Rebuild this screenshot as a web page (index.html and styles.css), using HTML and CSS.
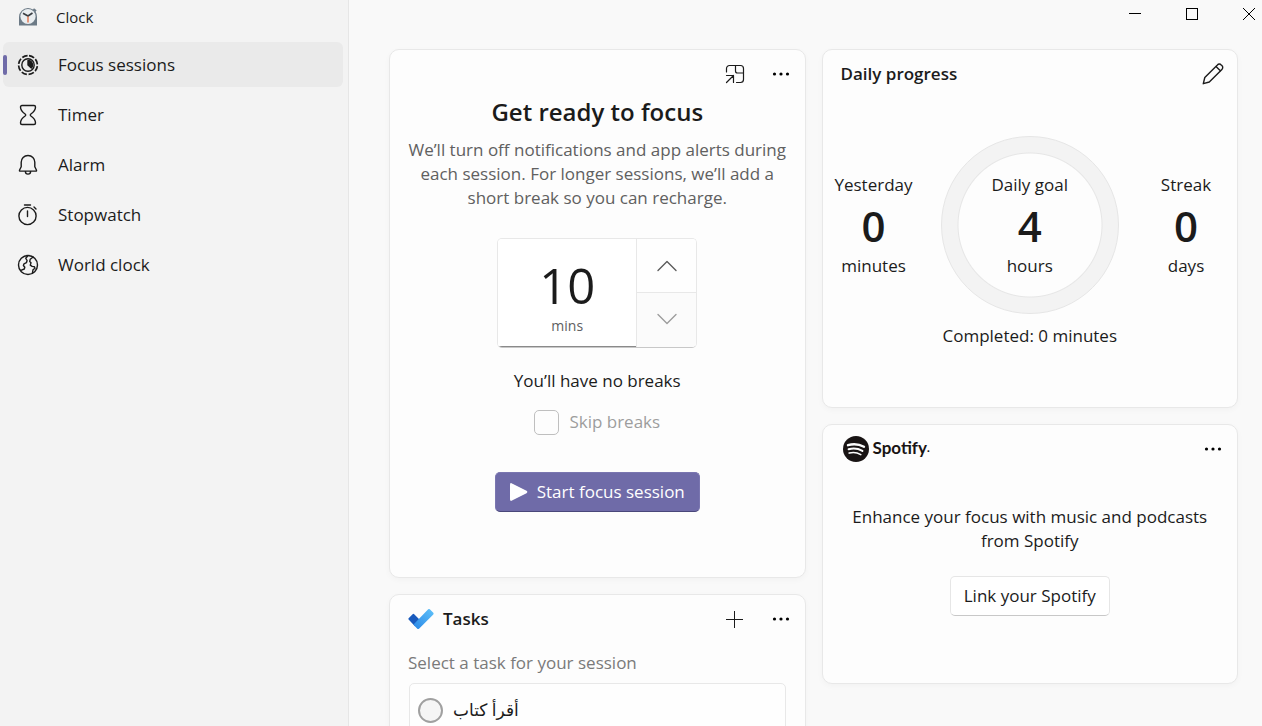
FILE: index.html
```html
<!DOCTYPE html>
<html lang="en">
<head>
<meta charset="utf-8">
<meta name="viewport" content="width=device-width, initial-scale=1">
<title>Clock</title>
<link rel="stylesheet" href="styles.css">
</head>
<body>
<div class="app">
  <aside class="sidebar">
    <div class="app-title">
      <svg class="app-icon" width="20" height="20" viewBox="0 0 20 20" aria-hidden="true">
        <path d="M1 18.500V10A9 9 0 0 1 10 1a9 9 0 0 1 5 1.500l1-1.300 2.600 2-1 1.600A9 9 0 0 1 19 10v8.500H1z" fill="#6c7a86"/>
        <circle cx="10" cy="9.500" r="7.600" fill="#e9edf0"/>
        <path d="M5 6.300 10 9l4.500-3" fill="none" stroke="#3b3f44" stroke-width="1.700"/>
        <path d="M10 9.500v6" stroke="#e2683c" stroke-width="1.300"/>
      </svg>
      <span>Clock</span>
    </div>
    <nav class="nav">
      <a class="nav-item active" href="#focus" aria-current="page">
        <svg class="icon" width="22" height="22" viewBox="0 0 22 22" aria-hidden="true">
          <circle cx="11" cy="11" r="9.400" stroke-width="1.700" stroke-linecap="butt" stroke-dasharray="5.600 1.780" transform="rotate(-84 11 11)"/>
          <circle cx="11" cy="11" r="6.200"/>
          <path d="M11 6.500a4.500 4.500 0 0 1 3.300 7.600L11 11z" fill="currentColor"/>
        </svg>
        <span>Focus sessions</span>
      </a>
      <a class="nav-item" href="#timer">
        <svg class="icon" width="22" height="22" viewBox="0 0 22 22" aria-hidden="true">
          <path d="M5 1.500h12q1.500 0 1.500 1.500c0 3.300-2 5.200-4.600 7q-1.200 1 0 2c2.600 1.800 4.600 3.700 4.600 7q0 1.500-1.500 1.500H5Q3.500 20.500 3.500 19c0-3.300 2-5.200 4.600-7q1.200-1 0-2C5.500 8.200 3.500 6.300 3.500 3Q3.500 1.500 5 1.500z"/>
        </svg>
        <span>Timer</span>
      </a>
      <a class="nav-item" href="#alarm">
        <svg class="icon" width="22" height="22" viewBox="0 0 22 22" aria-hidden="true">
          <path d="M11 1.500c-4 0-6.800 3-6.800 6.700v4.600L2.600 16q-.500 1.100.6 1.100h15.600q1.100 0 .6-1.100l-1.600-3.200V8.200c0-3.700-2.800-6.700-6.800-6.700zM8.400 17.500a2.600 2.600 0 0 0 5.200 0"/>
        </svg>
        <span>Alarm</span>
      </a>
      <a class="nav-item" href="#stopwatch">
        <svg class="icon" width="22" height="22" viewBox="0 0 22 22" aria-hidden="true">
          <circle cx="10.500" cy="12" r="8.600"/>
          <path d="M10.500 7v5.500M7.500 1h6M17 3l2 2"/>
        </svg>
        <span>Stopwatch</span>
      </a>
      <a class="nav-item" href="#world">
        <svg class="icon" width="22" height="22" viewBox="0 0 22 22" aria-hidden="true">
          <circle cx="11" cy="11" r="9.500"/>
          <path d="M10.800 1.800 8.800 4.300l1.300 2.200-.7 2.200L7 9.800l-.6 1.700 1.400 1.800-.5 1.700-3.500 1.300M16.200 3l-3 2.300-.5 2.200 1.300 1.300-.7 2.300 1.800 1.300 2.300.3.6 1.500-2 1.600-.6 3.300"/>
        </svg>
        <span>World clock</span>
      </a>
    </nav>
  </aside>

  <main class="main">
    <div class="window-controls">
      <button class="window-button" type="button" aria-label="Minimize"><svg class="crisp" width="12" height="12" viewBox="0 0 12 12"><path d="M0 5.500h12"/></svg></button>
      <button class="window-button" type="button" aria-label="Maximize"><svg class="crisp" width="12" height="12" viewBox="0 0 12 12"><path d="M.5.5h11v11H.5z"/></svg></button>
      <button class="window-button" type="button" aria-label="Close"><svg width="12" height="12" viewBox="0 0 12 12"><path d="M0 0l12 12M12 0 0 12"/></svg></button>
    </div>

    <div class="board">
      <div class="column">
        <section class="card focus-card">
          <div class="card-bar">
            <button class="icon-button" type="button" aria-label="Keep on top">
              <svg class="icon thin" width="20" height="20" viewBox="0 0 20 20"><path d="M1.500 8V4.500a3 3 0 0 1 3-3h11a3 3 0 0 1 3 3v11a3 3 0 0 1-3 3h-4M10.500 1.500V7a2 2 0 0 0 2 2h6M1.500 11.500h7v7M8.500 11.500l-7 7"/></svg>
            </button>
            <button class="icon-button" type="button" aria-label="More options">
              <svg width="18" height="18" viewBox="0 0 18 18"><circle cx="2.500" cy="9" r="1.600"/><circle cx="9" cy="9" r="1.600"/><circle cx="15.500" cy="9" r="1.600"/></svg>
            </button>
          </div>
          <h1 class="focus-title">Get ready to focus</h1>
          <p class="focus-text">We’ll turn off notifications and app alerts during each session. For longer sessions, we’ll add a short break so you can recharge.</p>
          <div class="spinner">
            <label class="spinner-value">
              <input class="spinner-input" type="text" inputmode="numeric" value="10">
              <span class="spinner-unit">mins</span>
            </label>
            <div class="spinner-steps">
              <button class="step" type="button" aria-label="Increase"><svg class="icon" width="20" height="12" viewBox="0 0 20 12"><path d="M1 10.500 10 1.500l9 9"/></svg></button>
              <button class="step step-down" type="button" aria-label="Decrease"><svg class="icon" width="20" height="12" viewBox="0 0 20 12"><path d="M1 1.500l9 9 9-9"/></svg></button>
            </div>
          </div>
          <p class="breaks">You’ll have no breaks</p>
          <label class="skip"><input class="checkbox" type="checkbox" disabled>Skip breaks</label>
          <button class="primary" type="button">
            <svg width="18" height="18" viewBox="0 0 18 18" aria-hidden="true"><path d="M0 1.500v15Q.200 18.500 2 17.600L16.500 10.200q1.600-1.200 0-2.400L2 .4Q.200-.500 0 1.500z"/></svg>
            Start focus session
          </button>
        </section>

        <section class="card tasks-card">
          <div class="card-bar">
            <svg class="tasks-logo" width="26" height="22" viewBox="0 0 26 22" aria-hidden="true">
              <defs><linearGradient id="tick" x1="0" y1="1" x2="1" y2="0"><stop offset="0" stop-color="#2987e6"/><stop offset="1" stop-color="#60c2fa"/></linearGradient></defs>
              <path d="M.6 10.200 4.600 6.200q.8-.700 1.600 0l6 6-5 6.400L.6 11.600q-.600-.700 0-1.400z" fill="#195abd"/>
              <path d="M6 15.900 20.200 1.300q.8-.700 1.600 0l3.500 3.500q.700.800 0 1.600L11 20.700q-.9.700-1.700 0L6 17.300q-.700-.700 0-1.400z" fill="url(#tick)"/>
            </svg>
            <h2 class="card-title">Tasks</h2>
            <button class="icon-button push" type="button" aria-label="Add a task"><svg class="icon crisp" width="17" height="17" viewBox="0 0 17 17"><path d="M8.500 0v17M0 8.500h17"/></svg></button>
            <button class="icon-button" type="button" aria-label="More options">
              <svg width="18" height="18" viewBox="0 0 18 18"><circle cx="2.500" cy="9" r="1.600"/><circle cx="9" cy="9" r="1.600"/><circle cx="15.500" cy="9" r="1.600"/></svg>
            </button>
          </div>
          <p class="tasks-hint">Select a task for your session</p>
          <label class="task"><input class="radio" type="radio" name="task"><span lang="ar" dir="rtl">أقرأ كتاب</span></label>
        </section>
      </div>

      <div class="column">
        <section class="card progress-card">
          <div class="card-bar">
            <h2 class="card-title">Daily progress</h2>
            <button class="icon-button push" type="button" aria-label="Edit daily goal">
              <svg class="icon" width="22" height="22" viewBox="0 0 22 22"><path d="M2.800 14.500 15.400 1.900a2.600 2.600 0 0 1 3.800 0l.7.700a2.600 2.600 0 0 1 0 3.800L7.300 19l-6 1.700zM14 3.500l4.600 4.600"/></svg>
            </button>
          </div>
          <div class="stats">
            <div class="stat"><span>Yesterday</span><strong class="stat-number">0</strong><span>minutes</span></div>
            <div class="ring"><div class="stat"><span>Daily goal</span><strong class="stat-number">4</strong><span>hours</span></div></div>
            <div class="stat"><span>Streak</span><strong class="stat-number">0</strong><span>days</span></div>
          </div>
          <p class="completed">Completed: 0 minutes</p>
        </section>

        <section class="card spotify-card">
          <div class="card-bar">
            <svg class="spotify-mark" width="26" height="26" viewBox="0 0 26 26" aria-hidden="true">
              <circle cx="13" cy="13" r="13" fill="#191414"/>
              <g fill="none" stroke="#fdfdfd" stroke-linecap="round"><path d="M5 9.200q8.500-2.400 16 1.600" stroke-width="2.400"/><path d="M5.600 13.300q7.400-2 13.800 1.600" stroke-width="2"/><path d="M6.200 17.100q6.200-1.600 11.600 1.500" stroke-width="1.600"/></g>
            </svg>
            <h2 class="spotify-name">Spotify<span class="mark">·</span></h2>
            <button class="icon-button push" type="button" aria-label="More options">
              <svg width="18" height="18" viewBox="0 0 18 18"><circle cx="2.500" cy="9" r="1.600"/><circle cx="9" cy="9" r="1.600"/><circle cx="15.500" cy="9" r="1.600"/></svg>
            </button>
          </div>
          <p class="spotify-text">Enhance your focus with music and podcasts from Spotify</p>
          <button class="secondary" type="button">Link your Spotify</button>
        </section>
      </div>
    </div>
  </main>
</div>
</body>
</html>
```
FILE: styles.css
```css
* { box-sizing: border-box; }

body {
  margin: 0;
  font: 17px/24px "Open Sans", "Noto Sans", "DejaVu Sans", sans-serif;
  color: #1b1b1b;
  background: #f9f9f9;
}

h1, h2, p { margin: 0; }
button, input { font: inherit; color: inherit; }
button { padding: 0; border: 0; background: none; }
svg { display: block; flex: none; }
.icon { fill: none; stroke: currentColor; stroke-width: 1.4; stroke-linejoin: round; stroke-linecap: round; }
.thin { stroke-width: 1.2; }
.crisp { shape-rendering: crispEdges; stroke-width: 1; }

.app { display: grid; grid-template-columns: 349px 1fr; height: 100vh; overflow: hidden; }

.sidebar { background: #f3f3f3; border-right: 1px solid #e6e6e6; }
.app-title { display: flex; align-items: center; gap: 18px; height: 34px; padding-left: 18px; font-size: 15px; }
.nav { display: flex; flex-direction: column; gap: 5px; padding: 8px 5px 0 3px; }
.nav-item {
  position: relative;
  display: flex;
  align-items: center;
  gap: 19px;
  height: 45px;
  padding-left: 14px;
  border-radius: 6px;
  color: inherit;
  text-decoration: none;
}
.nav-item.active { background: #eaeaea; }
.nav-item.active::before {
  content: "";
  position: absolute;
  left: 0;
  top: 13px;
  width: 4px;
  height: 20px;
  border-radius: 2px;
  background: #6f6ba8;
}

.main { overflow: hidden; }
.window-controls { display: flex; justify-content: flex-end; gap: 1px; height: 49px; }
.window-button { display: grid; place-items: center; width: 56px; height: 28px; stroke: #000; fill: none; }
.window-button:last-child { width: 26px; margin-left: 15px; }

.board { display: grid; grid-template-columns: 1fr 1fr; gap: 16px; padding: 0 24px 24px 40px; }
.column { display: flex; flex-direction: column; gap: 16px; min-width: 0; }
.card {
  display: flex;
  flex-direction: column;
  align-items: center;
  border: 1px solid #e8e8e8;
  border-radius: 10px;
  background: #fdfdfd;
  box-shadow: 0 2px 6px rgba(0, 0, 0, 0.03);
}
.card-bar { display: flex; align-items: center; width: 100%; padding: 8px 8px 0 18px; }
.card-title { font-size: 17px; font-weight: 600; }
.icon-button { display: grid; place-items: center; width: 32px; height: 32px; }
.icon-button + .icon-button { margin-left: 14px; }
.push { margin-left: auto; }

.focus-card { padding-bottom: 65px; }
.focus-card .card-bar { justify-content: flex-end; }
.focus-title { margin-top: 6px; font-size: 24px; line-height: 32px; font-weight: 600; }
.focus-text { width: 100%; margin-top: 10px; padding: 0 18px; text-align: center; color: #606060; }

.spinner {
  display: flex;
  width: 200px;
  height: 110px;
  margin-top: 28px;
  border: 1px solid #e8e8e8;
  border-bottom-color: #c8c8c8;
  border-radius: 5px;
  overflow: hidden;
}
.spinner-value {
  display: flex;
  flex: 1;
  flex-direction: column;
  align-items: center;
  padding-top: 17px;
  border-bottom: 1px solid #8a8a8a;
  background: #fff;
}
.spinner-input { width: 100%; height: 58px; padding: 0; border: 0; outline: 0; background: none; text-align: center; font-size: 49px; }
.spinner-unit { font-size: 14px; line-height: 24px; color: #606060; }
.spinner-steps { display: grid; grid-template-rows: 1fr 1fr; width: 60px; padding-bottom: 2px; border-left: 1px solid #e8e8e8; background: #fbfbfb; }
.step { display: grid; place-items: center; color: #5c5c5c; background: #fefefe; }
.step-down { border-top: 1px solid #e8e8e8; color: #9d9d9d; background: #fbfbfb; }

.breaks { margin-top: 21px; }
.skip { display: flex; align-items: center; gap: 10px; height: 26px; margin-top: 16px; color: #9d9d9d; }
.checkbox, .radio { appearance: none; width: 25px; height: 25px; margin: 0; }
.checkbox { border: 1px solid #bfbfbf; border-radius: 5px; }
.primary {
  display: flex;
  align-items: center;
  gap: 9px;
  height: 40px;
  margin-top: 37px;
  padding: 0 14px;
  border: 1px solid #7a76b0;
  border-bottom-color: #4a477a;
  border-radius: 5px;
  background: #6f6ba8;
  color: #fff;
  fill: #fff;
}

.tasks-card { padding: 0 0 24px; }
.tasks-logo { margin-right: 9px; }
.tasks-hint { width: 100%; margin-top: 16px; padding: 0 18px; color: #7a7a7a; }
.task {
  display: flex;
  align-items: center;
  gap: 10px;
  width: calc(100% - 38px);
  height: 54px;
  margin-top: 8px;
  padding-left: 8px;
  border: 1px solid #e8e8e8;
  border-radius: 5px;
  background: #fefefe;
}
.radio { border: 2px solid #a0a0a0; border-radius: 50%; background: #f5f5f5; }

.progress-card { padding-bottom: 59px; }
.stats { display: grid; grid-template-columns: 102px 1fr 102px; align-items: center; width: 100%; margin-top: 46px; }
.stat { display: flex; flex-direction: column; align-items: center; }
.stat-number { font-size: 42px; line-height: 57px; font-weight: 600; }
.ring {
  display: grid;
  place-items: center;
  justify-self: center;
  width: 178px;
  height: 178px;
  border: 1px solid #e6e6e6;
  border-radius: 50%;
  background: radial-gradient(closest-side, #fdfdfd 71px, #e6e6e6 72px, #f3f3f3 73px);
}
.completed { margin-top: 10px; }

.spotify-card { padding-bottom: 67px; }
.spotify-mark { margin: 0 4px 0 2px; }
.spotify-name { font: 700 17px/24px Lato, "Open Sans", sans-serif; color: #191414; }
.mark { font-size: 10px; }
.spotify-text { max-width: 380px; margin-top: 40px; text-align: center; }
.secondary {
  height: 40px;
  margin-top: 23px;
  padding: 0 13px;
  border: 1px solid #e6e6e6;
  border-bottom-color: #c8c8c8;
  border-radius: 5px;
  background: #fff;
}
```
